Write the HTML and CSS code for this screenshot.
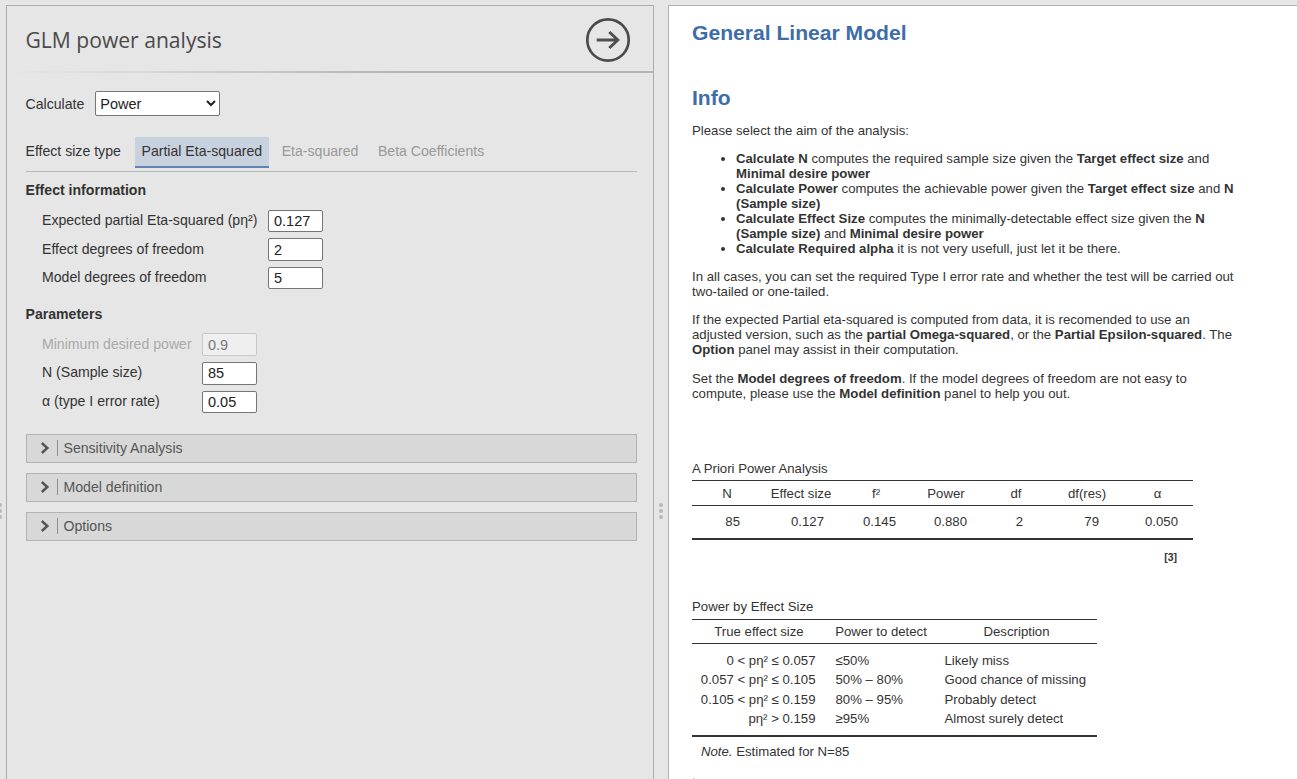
FILE: index.html
```html
<!DOCTYPE html>
<html lang="en">
<head>
<meta charset="utf-8">
<title>GLM power analysis</title>
<link rel="stylesheet" href="styles.css">
</head>
<body>
<div class="app">
  <div class="splitter edge"><i></i><i></i><i></i></div>
  <aside class="options">
    <header class="opt-head">
      <h1>GLM power analysis</h1>
      <svg class="go" width="46" height="46" viewBox="0 0 46 46" aria-hidden="true">
        <circle cx="23" cy="23" r="20.700" fill="none" stroke="#4b4b4b" stroke-width="2.700"/>
        <path d="M11.700 23H33.500M24.300 15L32.800 23L24.300 31" fill="none" stroke="#505050" stroke-width="3"/>
      </svg>
    </header>
    <div class="opt-body">
      <div class="calc">
        <label>Calculate</label>
        <select class="sel"><option>Power</option></select>
      </div>
      <div class="tabs">
        <span class="tabs-label">Effect size type</span>
        <span class="tab active">Partial Eta-squared</span>
        <span class="tab">Eta-squared</span>
        <span class="tab">Beta Coefficients</span>
      </div>
      <h2 class="sec first">Effect information</h2>
      <div class="grid wide">
        <label>Expected partial Eta-squared (pη²)</label><input class="num" value="0.127">
        <label>Effect degrees of freedom</label><input class="num" value="2">
        <label>Model degrees of freedom</label><input class="num" value="5">
      </div>
      <h2 class="sec second">Parameters</h2>
      <div class="grid narrow">
        <label class="off">Minimum desired power</label><input class="num" value="0.9" disabled>
        <label>N (Sample size)</label><input class="num" value="85">
        <label>α (type I error rate)</label><input class="num" value="0.05">
      </div>
      <div class="collapses">
        <div class="collapse"><svg class="chev" width="10" height="14" viewBox="0 0 10 14"><path d="M1.800 2L7.300 7L1.800 12" fill="none" stroke="#555" stroke-width="2.500"/></svg><span>Sensitivity Analysis</span></div>
        <div class="collapse"><svg class="chev" width="10" height="14" viewBox="0 0 10 14"><path d="M1.800 2L7.300 7L1.800 12" fill="none" stroke="#555" stroke-width="2.500"/></svg><span>Model definition</span></div>
        <div class="collapse"><svg class="chev" width="10" height="14" viewBox="0 0 10 14"><path d="M1.800 2L7.300 7L1.800 12" fill="none" stroke="#555" stroke-width="2.500"/></svg><span>Options</span></div>
      </div>
    </div>
  </aside>
  <div class="splitter"><i></i><i></i><i></i></div>
  <main class="results">
    <h2 class="r-title">General Linear Model</h2>
    <h2 class="r-info">Info</h2>
    <p>Please select the aim of the analysis:</p>
    <ul>
      <li><b>Calculate N</b> computes the required sample size given the <b>Target effect size</b> and <b>Minimal desire power</b></li>
      <li><b>Calculate Power</b> computes the achievable power given the <b>Target effect size</b> and <b>N (Sample size)</b></li>
      <li><b>Calculate Effect Size</b> computes the minimally-detectable effect size given the <b>N (Sample size)</b> and <b>Minimal desire power</b></li>
      <li><b>Calculate Required alpha</b> it is not very usefull, just let it be there.</li>
    </ul>
    <p>In all cases, you can set the required Type I error rate and whether the test will be carried out two-tailed or one-tailed.</p>
    <p>If the expected Partial eta-squared is computed from data, it is recomended to use an adjusted version, such as the <b>partial Omega-squared</b>, or the <b>Partial Epsilon-squared</b>. The <b>Option</b> panel may assist in their computation.</p>
    <p class="last-p">Set the <b>Model degrees of freedom</b>. If the model degrees of freedom are not easy to compute, please use the <b>Model definition</b> panel to help you out.</p>

    <div class="t-title t1-title">A Priori Power Analysis</div>
    <table class="t1">
      <thead><tr><th>N</th><th>Effect size</th><th>f²</th><th>Power</th><th>df</th><th>df(res)</th><th>α</th></tr></thead>
      <tbody><tr><td>85</td><td>0.127</td><td>0.145</td><td>0.880</td><td>2</td><td>79</td><td>0.050</td></tr></tbody>
    </table>
    <div class="ref">[3]</div>

    <div class="t-title t2-title">Power by Effect Size</div>
    <table class="t2">
      <thead><tr><th>True effect size</th><th>Power to detect</th><th>Description</th></tr></thead>
      <tbody>
        <tr><td>0 &lt; pη² ≤ 0.057</td><td>≤50%</td><td>Likely miss</td></tr>
        <tr><td>0.057 &lt; pη² ≤ 0.105</td><td>50% – 80%</td><td>Good chance of missing</td></tr>
        <tr><td>0.105 &lt; pη² ≤ 0.159</td><td>80% – 95%</td><td>Probably detect</td></tr>
        <tr><td>pη² &gt; 0.159</td><td>≥95%</td><td>Almost surely detect</td></tr>
      </tbody>
    </table>
    <div class="note"><em>Note.</em> Estimated for N=85</div>
    <div class="more"></div>
  </main>
</div>
</body>
</html>
```
FILE: styles.css
```css
* { box-sizing: border-box; }
html, body { margin: 0; height: 779px; overflow: hidden; }
body { background: #e6e6e6; font-family: "Liberation Sans", Arial, sans-serif; color: #333; }
.app { display: flex; height: 779px; padding-top: 5px; }

.options {
  width: 648px; height: 774px; flex: none;
  border: 1px solid #acacac; border-bottom: 0; background: #e6e6e6;
}
.opt-head {
  height: 67px; display: flex; align-items: center; justify-content: space-between;
  padding: 2px 22px 0 18.500px;
  border-bottom: 2px solid transparent;
  border-image: linear-gradient(to right, #e6e6e6 0, #dcdcdc 100px, #b3b3b3 400px, #b3b3b3 100%) 1;
}
.opt-head h1 { margin: 0; font: 400 21.100px/30px "Open Sans", sans-serif; color: #4a4a4a; }
.go { display: block; }
.opt-body { padding: 18px 16px 0 18.500px; font-size: 14.100px; color: #333; }
.calc { display: flex; align-items: center; gap: 11px; height: 25px; }
.sel {
  width: 125px; height: 25px; font: 14.500px "Liberation Sans", sans-serif; background: #fff; color: #222;
  border: 1px solid #767676; border-radius: 2px; padding-left: 0;
}
.tabs { display: flex; align-items: stretch; height: 35px; margin-top: 21px; border-bottom: 1px solid #b9b9b9; }
.tabs-label { width: 109.500px; padding-top: 6px; line-height: 16px; }
.tab { padding: 6px 7px 0 6.500px; margin-right: 6px; height: 31px; line-height: 16px; color: #999; border-bottom: 2px solid transparent; }
.tab.active { color: #333; background: #c8d2de; border-bottom-color: #5d84b5; }
.sec { margin: 0; font-size: 14.100px; line-height: 16px; font-weight: 700; color: #333; }
.sec.first { margin-top: 10px; }
.sec.second { margin-top: 17px; }
.grid { display: grid; align-items: center; padding-left: 16.500px; row-gap: 6px; }
.grid.wide { grid-template-columns: 226px 55px; margin-top: 11.700px; }
.grid.narrow { grid-template-columns: 160px 55px; margin-top: 10.900px; }
.grid label { line-height: 16px; position: relative; top: -0.800px; }
.grid .off { color: #aaa; }
.num {
  width: 55px; height: 22.600px; padding: 1px 5px; font: 14.500px "Liberation Sans", sans-serif; color: #222;
  background: #fff; border: 1px solid #767676; border-radius: 2px;
}
.num:disabled { background: #efefef; color: #777; border-color: #c8c8c8; }
.collapses { margin-top: 20.800px; display: flex; flex-direction: column; gap: 10px; }
.collapse {
  height: 29px; display: flex; align-items: center; padding-left: 13px;
  background: #d8d8d8; border: 1px solid #b3b3b3; color: #555; font-size: 14.100px;
}
.chev { flex: none; }
.collapse span { margin-left: 7px; padding-left: 6px; border-left: 1px solid #8f8f8f; line-height: 16px; }

.splitter { width: 14px; height: 774px; flex: none; display: flex; flex-direction: column; align-items: center; gap: 2px; padding-top: 498px; }
.splitter i { width: 4px; height: 4px; border-radius: 50%; background: #b9b9b9; display: block; }
.splitter.edge { width: 6px; align-items: flex-start; }
.splitter.edge i { margin-left: -2px; }

.results {
  flex: 1; height: 775px; background: #fff; border: 1px solid #b3b3b3; overflow: hidden;
  border-right: 0; border-bottom: 0; padding: 0 0 0 23px; font-size: 13.200px; line-height: 15px; color: #333;
}
.r-title { margin: 15px 0 0; font-size: 21.100px; line-height: 24px; color: #3e6da9; font-weight: 700; }
.r-info { margin: 41px 0 0; font-size: 21.100px; line-height: 24px; color: #3e6da9; font-weight: 700; }
.results p { margin: 13px 0; width: 548px; }
.results p.last-p { margin-top: 14px; }
.results ul { margin: 13px 0; padding-left: 44px; width: 548px; }
.t-title { font-size: 13.200px; line-height: 15px; color: #333; }
.t1-title { margin-top: 60px; }
table { border-collapse: collapse; font-size: 13.200px; color: #333; }
.t1 { width: 501px; margin-top: 4px; border-bottom: 2px solid #333; table-layout: fixed; }
.t1 th { font-weight: 400; height: 25px; padding: 0; text-align: center; border-top: 1px solid #333; border-bottom: 1px solid #333; }
.t1 td { height: 33px; padding: 0 15px 1px 0; text-align: right; }
.t1 th:nth-child(1) { width: 70px; }
.t1 th:nth-child(2) { width: 78px; }
.t1 th:nth-child(3) { width: 72px; }
.t1 th:nth-child(4) { width: 68px; }
.t1 th:nth-child(5) { width: 72px; }
.t1 th:nth-child(6) { width: 70px; }
.t1 td:nth-child(1) { padding-right: 22px; }
.t1 td:nth-child(2) { padding-right: 16px; }
.t1 td:nth-child(3) { padding-right: 16px; }
.t1 td:nth-child(4) { padding-right: 13px; }
.t1 td:nth-child(5) { padding-right: 29px; }
.t1 td:nth-child(6) { padding-right: 23px; }
.ref { width: 485px; text-align: right; font-size: 10.500px; font-weight: 700; line-height: 12px; margin-top: 11px; }
.t2-title { margin-top: 36px; }
.t2 { width: 405px; margin-top: 5px; border-bottom: 2px solid #333; table-layout: fixed; }
.t2 th { font-weight: 400; height: 24px; padding: 0; text-align: center; border-top: 1px solid #333; border-bottom: 1px solid #333; }
.t2 td { padding: 2px 0; line-height: 15.500px; }
.t2 tbody tr:first-child td { padding-top: 9px; }
.t2 tbody tr:last-child td { padding-bottom: 8px; }
.t2 td:first-child { text-align: right; padding-right: 10.500px; }
.t2 td:nth-child(2) { padding-left: 9.500px; }
.t2 td:nth-child(3) { padding-left: 8.500px; }
.t2 th:nth-child(1) { width: 134px; }
.t2 th:nth-child(2) { width: 110px; }
.note { margin-top: 7px; padding-left: 9px; }
.more { width: 2px; height: 1px; margin: 19px 0 0 1px; background: #ccd3e6; }
```
